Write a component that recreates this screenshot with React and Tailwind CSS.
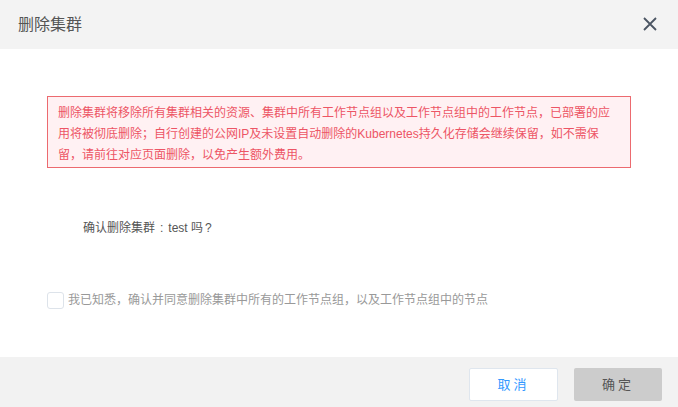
export default function App() {
  return (
    <div
      className="w-[678px] h-[407px] bg-white flex flex-col overflow-hidden"
      style={{ fontFamily: '"Liberation Sans", "Noto Sans CJK SC", sans-serif' }}
    >
      <div className="h-[49px] shrink-0 bg-[#f3f3f3] flex items-center justify-between pl-[18px] pr-[21px]">
        <span className="text-[16px] text-[#555] leading-none">删除集群</span>
        <svg width="14" height="14" viewBox="0 0 14 14" className="mt-[-2px]">
          <path d="M1 1L13 13M13 1L1 13" stroke="#4b5563" strokeWidth="1.8" fill="none" />
        </svg>
      </div>
      <div className="flex-1 flex flex-col pt-[47px] px-[47px]">
        <div className="border border-[#ec6a6f] bg-[#fff1f3] px-[10px] pt-[6px] pb-[1px] text-[12px] leading-[21px] text-[#ed5565]">
          删除集群将移除所有集群相关的资源、集群中所有工作节点组以及工作节点组中的工作节点，已部署的应用将被彻底删除；自行创建的公网IP及未设置自动删除的Kubernetes持久化存储会继续保留，如不需保留，请前往对应页面删除，以免产生额外费用。
        </div>
        <div className="mt-[50px] pl-[36px] text-[12px] leading-[20px] text-[#555]">
          确认删除集群<span className="px-[5px]">:</span>test 吗<span className="pl-[2px]">?</span>
        </div>
        <label className="mt-[53px] flex items-center gap-[4px] text-[12px] text-[#999]">
          <span className="w-[17px] h-[17px] rounded-[3px] border border-[#dde3ea] bg-white" />
          <span>我已知悉，确认并同意删除集群中所有的工作节点组，以及工作节点组中的节点</span>
        </label>
      </div>
      <div className="h-[50px] shrink-0 bg-[#f2f2f2] flex items-start justify-end pt-[11px] pr-[16px] gap-[16px]">
        <button className="w-[89px] h-[33px] bg-white border border-[#dfe6ee] rounded-[2px] text-[13px] text-[#3399ff] tracking-[3px]">
          取消
        </button>
        <button className="w-[88px] h-[33px] bg-[#cccccc] rounded-[2px] text-[13px] text-[#555] tracking-[3px]">
          确定
        </button>
      </div>
    </div>
  );
}
